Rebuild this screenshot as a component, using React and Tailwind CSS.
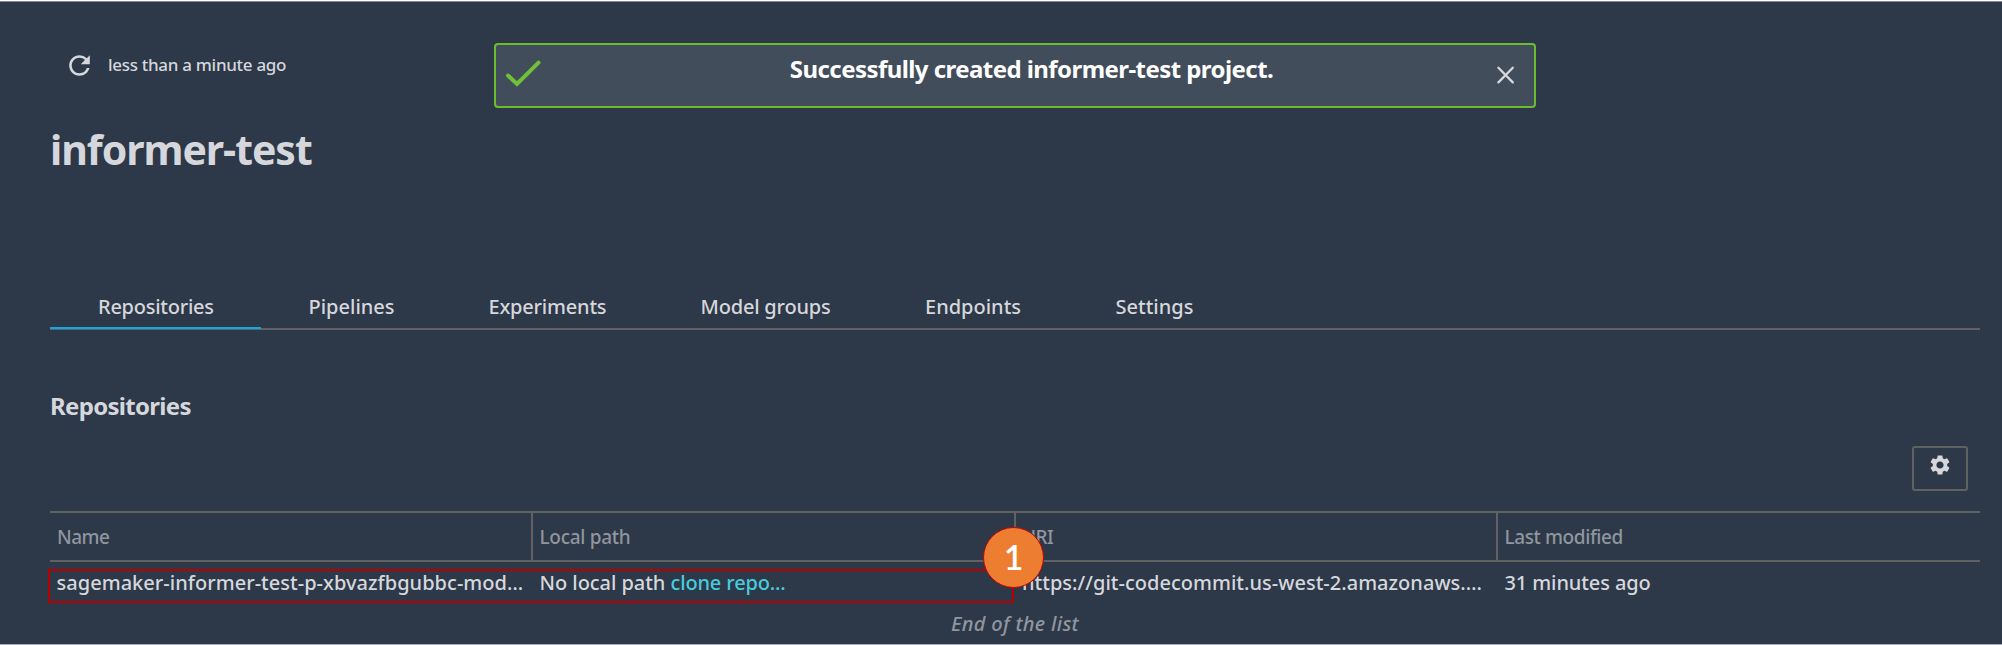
import { MdRefresh, MdSettings } from "react-icons/md";

function Toast() {
  return (
    <div className="absolute left-[494px] top-[42px] flex h-[65px] w-[1042px] rounded-[4px] border-2 border-[#6bbd2f] bg-[#424d5b]">
      <svg className="ml-[8px] mt-[13px] h-[32px] w-[40px] shrink-0" viewBox="0 0 40 32" fill="none">
        <path d="M4 17.5 L13 26 L34.5 4.6" stroke="#6fc135" strokeWidth="4" strokeLinecap="round" />
      </svg>
      <p className="w-[971px] pt-[9px] pl-[4px] text-center text-[24px] leading-[30px] font-bold tracking-[-0.56px] text-white">
        Successfully created informer-test project.
      </p>
      <svg className="absolute left-[1000px] top-[20px] h-5 w-5" viewBox="0 0 20 20" fill="none">
        <path d="M2.4 2.8 L16.8 17.4 M16.8 2.8 L2.4 17.4" stroke="#d6d7db" strokeWidth="2.3" strokeLinecap="round" />
      </svg>
    </div>
  );
}

function Tabs() {
  return (
    <nav className="mt-[112px] ml-[50px] flex h-[44px] w-[1930px] border-b-2 border-[#606163] text-[20px] leading-[30px] font-medium text-[#d5d7dc]">
      <div className="mb-[-1px] h-[43px] w-[211px] border-b-[2px] border-[#10a9e6] pt-[6px] pl-[48px] tracking-[-0.25px]">Repositories</div>
      <div className="w-[180px] pt-[6px] pl-[47.5px]">Pipelines</div>
      <div className="w-[212px] pt-[6px] pl-[47.5px] tracking-[-0.2px]">Experiments</div>
      <div className="w-[225px] pt-[6px] pl-[47.5px] tracking-[-0.2px]">Model groups</div>
      <div className="w-[189px] pt-[6px] pl-[47px]">Endpoints</div>
      <div className="pt-[6px] pl-[48.5px]">Settings</div>
    </nav>
  );
}

function RepoTable() {
  return (
    <section className="mt-[20px] ml-[50px] w-[1930px] text-[20px] leading-[30px] font-medium text-[#d5d7dc]">
      <div className="grid h-[51px] grid-cols-[483px_483px_482px_1fr] border-y-2 border-[#606163] text-[19px] leading-[49px] text-[#8f969f]">
        <div className="h-[47px] border-r-2 border-[#606163] pl-[7px] tracking-[-0.5px]">Name</div>
        <div className="h-[47px] border-r-2 border-[#606163] pl-[6.5px] tracking-[-0.3px]">Local path</div>
        <div className="h-[47px] border-r-2 border-[#606163] pl-[6px] tracking-[-0.5px]">URI</div>
        <div className="h-[47px] pl-[6.5px] tracking-[-0.4px]">Last modified</div>
      </div>
      <div className="grid grid-cols-[483px_483px_482px_1fr] pt-[6px] whitespace-nowrap">
        <div className="pl-[6.5px] tracking-[0.03px]">sagemaker-informer-test-p-xbvazfbgubbc-mod…</div>
        <div className="pl-[6.5px]">
          <span className="tracking-[-0.05px]">No local path </span>
          <span className="tracking-[-0.15px] text-[#48cbdb]">clone repo...</span>
        </div>
        <div className="pl-[6px] tracking-[0.02px]">https://git-codecommit.us-west-2.amazonaws.…</div>
        <div className="pl-[6.5px] tracking-[-0.1px]">31 minutes ago</div>
      </div>
      <p className="mt-[11px] text-center text-[20px] tracking-[0.3px] italic text-[#8f969f]">End of the list</p>
    </section>
  );
}

export default function App() {
  return (
    <div className="relative h-[645px] w-[2002px] overflow-hidden border-t border-b border-t-white border-b-[#a9adb5] bg-[#2d3848] font-['Noto_Sans',sans-serif]">
      <div className="h-px bg-[#848a93]" />
      <div className="mt-[47px] ml-[64px] flex h-[31px] items-center">
        <MdRefresh className="mt-[2px] h-[31px] w-[31px] shrink-0 text-[#d5d7dc]" />
        <span className="ml-[13px] text-[17px] leading-[31px] font-medium tracking-[-0.3px] text-[#d5d7dc]">less than a minute ago</span>
      </div>
      <h1 className="mt-[44px] ml-[50px] text-[41px] leading-[50px] font-bold tracking-[-1.05px] text-[#d5d7dc]">informer-test</h1>
      <Tabs />
      <h2 className="mt-[60px] ml-[50px] text-[24px] leading-[32px] font-bold tracking-[-0.7px] text-[#d5d7dc]">Repositories</h2>
      <div className="mt-[24px] ml-[1912px] flex h-[45px] w-[56px] justify-center rounded-[3px] border-2 border-[#606163] pt-[5px]">
        <MdSettings className="h-[24px] w-[24px] text-[#d5d7dc]" />
      </div>
      <RepoTable />
      <Toast />
      <div className="absolute left-[48px] top-[568px] h-[34px] w-[966px] border-2 border-[#b80000]" />
      <div className="absolute left-[983px] top-[526px] flex h-[61px] w-[61px] items-center justify-center rounded-full border border-[#c00000] bg-[#ed7d31] pb-[2px] font-['Lato',sans-serif] text-[34px] leading-none font-semibold text-white">
        1
      </div>
    </div>
  );
}
